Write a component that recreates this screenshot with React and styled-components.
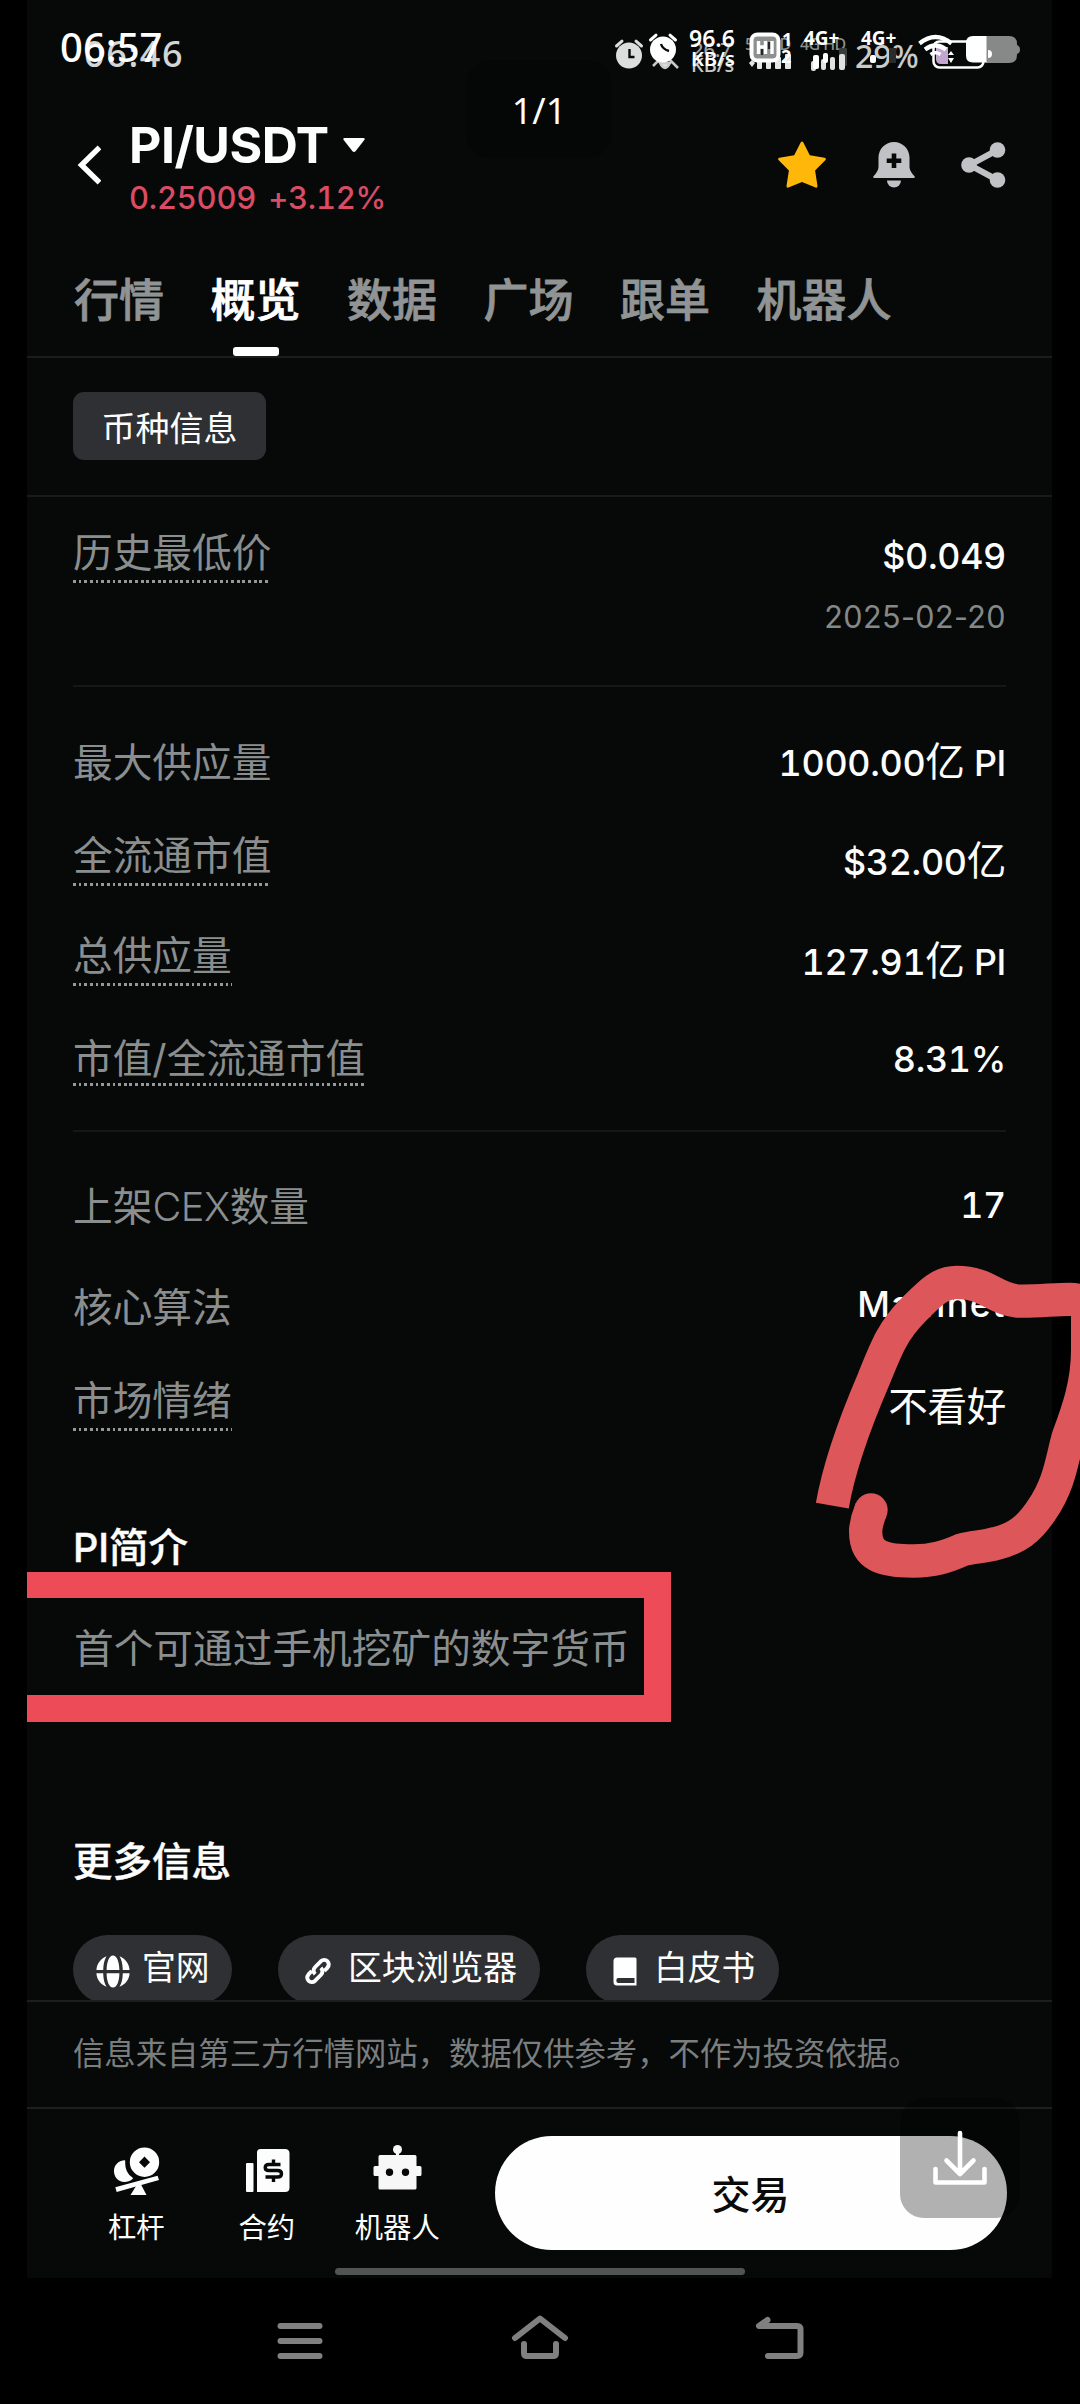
import React from "react";
import styled, { createGlobalStyle } from "styled-components";

const Global = createGlobalStyle`
  * { box-sizing: border-box; }
  body {
    margin: 0;
    background: #000;
    font-family: Inter, "Noto Sans CJK SC", sans-serif;
    color: #fdfdfd;
  }
`;

const Screen = styled.div`
  position: relative;
  width: 1080px;
  height: 2404px;
  overflow: hidden;
  background: #000;
`;

const Panel = styled.main`
  display: flex;
  flex-direction: column;
  width: 1025px;
  height: 2278px;
  margin-left: 27px;
  padding-top: 90px;
  background: #060908;
`;

/* ---------- header ---------- */
const Header = styled.header`
  display: flex;
  height: 160px;
  padding: 30px 46px 0 44px;
`;

const IconSlot = styled.div`
  display: flex;
  align-items: center;
  height: 89px;
  gap: ${(p) => p.$gap || 0}px;
`;

const TitleBlock = styled.div`
  flex: 1;
  margin-left: 28px;
`;

const Title = styled.h1`
  display: flex;
  align-items: center;
  gap: 13px;
  margin: 0;
  font-size: 50px;
  font-weight: 700;
  line-height: 50px;
  letter-spacing: -0.5px;
`;

const Price = styled.div`
  margin: 8px 0 0;
  color: #d94c64;
  font-size: 31px;
  font-weight: 500;
  line-height: 40px;
  letter-spacing: -0.25px;
  word-spacing: 4px;
  font-feature-settings: "tnum";
`;

/* ---------- tabs ---------- */
const Tabs = styled.nav`
  display: flex;
  gap: 46.5px;
  height: 108px;
  padding-left: 47px;
  border-bottom: 2px solid #1a1d1c;
`;

const Tab = styled.div`
  display: flex;
  flex-direction: column;
  align-items: center;
  justify-content: space-between;
  padding-top: 26px;
  color: ${(p) => (p.$active ? "#fff" : "#909495")};
  -webkit-text-stroke: 0.8px currentColor;
  font-size: 45px;
  font-weight: 500;
  line-height: 50px;
  &::after {
    content: "";
    width: 46px;
    height: 9px;
    border-radius: 3px;
    background: ${(p) => (p.$active ? "#fff" : "transparent")};
  }
`;

const TagBar = styled.div`
  height: 139px;
  padding: 34px 46px 0;
  border-bottom: 2px solid #181b1a;
`;

const Tag = styled.span`
  display: inline-flex;
  align-items: center;
  justify-content: center;
  width: 193px;
  height: 68px;
  padding-top: 6px;
  border-radius: 11px;
  background: #2f3033;
  font-size: 34px;
  line-height: 40px;
`;

/* ---------- details ---------- */
const Body = styled.section`
  height: 1503px;
  padding: 0 46px;
  overflow: hidden;
`;

const Group = styled.div`
  padding-top: ${(p) => p.$top}px;
  border-bottom: ${(p) => (p.$last ? "none" : "2px solid #141716")};
`;

const Row = styled.div`
  display: flex;
  justify-content: space-between;
  align-items: flex-start;
  height: ${(p) => p.$h}px;
`;

const Label = styled.span`
  margin-top: 1px;
  color: #8b8e8f;
  font-size: 39.7px;
  font-weight: 400;
  line-height: 40px;
  white-space: nowrap;
  padding-bottom: ${(p) => (p.$gap ? p.$gap - 1 : 0)}px;
  background: ${(p) =>
    p.$gap
      ? "repeating-linear-gradient(90deg, #96999a 0 2.8px, transparent 2.8px 5.65px) bottom left / 100% 3px no-repeat"
      : "none"};
`;

const Latin = styled.span`
  font-weight: 300;
  letter-spacing: -0.5px;
`;

const Value = styled.div`
  margin-top: ${(p) => p.$dy || 0}px;
  font-size: 35.8px;
  font-weight: 500;
  line-height: 40px;
  letter-spacing: ${(p) => (p.$ls === undefined ? -0.3 : p.$ls)}px;
  text-align: right;
  font-feature-settings: "tnum";
  & small {
    display: block;
    margin-top: 21px;
    color: #858889;
    font-size: 30.5px;
    font-weight: 400;
    letter-spacing: 0.4px;
    font-feature-settings: normal;
  }
`;

const Han = styled.span`
  font-size: 39.6px;
  font-weight: 400;
`;

const SectionTitle = styled.h2`
  margin: 0;
  padding-top: 1px;
  font-size: 39.5px;
  font-weight: 500;
  line-height: 39px;
  -webkit-text-stroke: 0.4px currentColor;
`;

const Highlight = styled.div`
  width: 644px;
  height: 150px;
  margin: 4px 0 120px -46px;
  padding: 31px 0 0 47px;
  border: solid #ee4b58;
  border-width: 26px 27px 27px 0;
`;

const Links = styled.div`
  display: flex;
  gap: 46px;
  margin-top: 53px;
`;

const Pill = styled.a`
  display: flex;
  align-items: center;
  flex: none;
  gap: ${(p) => p.$gap}px;
  width: ${(p) => p.$w}px;
  height: 69px;
  padding: 0 0 4px ${(p) => p.$pad}px;
  border-radius: 35px;
  background: #2f3033;
  font-size: 33.8px;
  line-height: 40px;
  white-space: nowrap;
  & svg { margin-top: 7px; }
`;

const Disclaimer = styled.p`
  height: 107px;
  margin: 0;
  padding: 30px 46px 0;
  border-top: 2px solid #1c1f1e;
  color: #7b7e7f;
  font-size: 31.35px;
  font-weight: 400;
  line-height: 40px;
  font-family: "Noto Sans CJK SC", sans-serif;
`;

/* ---------- bottom bar ---------- */
const BottomBar = styled.footer`
  display: flex;
  height: 161px;
  padding: 27px 0 0 44px;
  border-top: 2px solid #1c1f1e;
`;

const Shortcut = styled.div`
  display: flex;
  flex-direction: column;
  align-items: center;
  gap: 15px;
  width: 130.5px;
  padding-top: 8px;
  font-size: 28.3px;
  line-height: 34px;
`;

const TradeButton = styled.button`
  width: 512px;
  height: 114px;
  margin-left: 32px;
  padding: 0 0 2px;
  border: 0;
  border-radius: 57px;
  background: #fefefe;
  color: #0a0a0a;
  font: 500 39px Inter, "Noto Sans CJK SC", sans-serif;
`;

const HomeIndicator = styled.div`
  flex: none;
  width: 410px;
  height: 7px;
  margin: 0 auto;
  border-radius: 4px;
  background: #525453;
`;

const SystemNav = styled.nav`
  display: flex;
  justify-content: space-between;
  align-items: center;
  height: 126px;
  padding: 0 270px;
`;

/* ---------- floating layers ---------- */
const PageCount = styled.div`
  position: absolute;
  left: 466px;
  top: 60px;
  width: 146px;
  height: 98px;
  border-radius: 24px;
  background: rgba(0, 0, 0, 0.22);
  font: 400 36px/98px "Noto Sans", sans-serif;
  padding-top: 2px;
  text-align: center;
`;

const Download = styled.div`
  position: absolute;
  left: 900px;
  top: 2098px;
  width: 120px;
  height: 120px;
  border-radius: 24px;
  background: rgba(0, 0, 0, 0.3);
`;

const Scribble = styled.svg`
  position: absolute;
  left: 740px;
  top: 1150px;
`;

const StatusLayer = styled.div`
  position: absolute;
  inset: 0 0 auto 0;
  height: 90px;
`;

const StatusArt = styled.svg`
  position: absolute;
  left: 600px;
  top: 20px;
`;

const StatusText = styled.span`
  position: absolute;
  left: ${(p) => p.$x}px;
  top: ${(p) => p.$y}px;
  color: ${(p) => p.$c || "#fff"};
  font-family: "Noto Sans", sans-serif;
  font-size: ${(p) => p.$s}px;
  font-weight: ${(p) => p.$w || 500};
  line-height: 1;
  letter-spacing: ${(p) => p.$ls || 0}px;
  white-space: nowrap;
`;

/* ---------- drawings ---------- */
const BackIcon = () => (
  <svg width="30" height="40" viewBox="0 0 30 40" fill="none" stroke="#fff" strokeWidth="5.4">
    <path d="M28.5 2.5 10.5 20 28.5 37.5" strokeLinejoin="miter" />
  </svg>
);

const Caret = () => (
  <svg width="24" height="16" viewBox="0 0 24 16" fill="#fff">
    <path d="M2.5 1h19q2 .4.8 2L13.5 14.200q-1.500 1.500-3 0L1.700 3q-1.200-1.600.8-2z" />
  </svg>
);

const Star = () => (
  <svg width="48" height="47" viewBox="0 0 48 47" fill="#ffb70a">
    <path d="M22.800 1.200q1.200-1.600 2.400 0L31.800 14.300l14.800 2.400q2 .6.900 2.200L37.100 29.500l2.400 15.600q0 2-1.900 1.500L24 41l-13.600 5.600q-1.900.5-1.900-1.500l2.400-15.600L.5 18.900q-1.100-1.600.9-2.200l14.800-2.400z" />
  </svg>
);

const Bell = () => (
  <svg width="42" height="46" viewBox="0 0 42 46" fill="#bfc3c5">
    <path
      fillRule="evenodd"
      d="M21 0C29.500 0 36.500 7 36.500 15.500V25c0 3 2 6 5.200 9.400q.5 1.600-1 1.600H1.300q-1.500 0-1-1.600C3.500 31 5.500 28 5.500 25V15.500C5.500 7 12.500 0 21 0zM18.700 11.500v5h-5v4.600h5v5h4.600v-5h5v-4.600h-5v-5z"
    />
    <path d="M14 38.500h14a7 7 0 0 1-14 0z" />
  </svg>
);

const Share = () => (
  <svg width="45" height="46" viewBox="0 0 45 46" fill="#bfc3c5" stroke="#bfc3c5">
    <path d="M36.500 8 8.500 23l28 15" fill="none" strokeWidth="6" />
    <circle cx="8" cy="23" r="7.800" stroke="none" />
    <circle cx="36.500" cy="8" r="7.800" stroke="none" />
    <circle cx="36.500" cy="38" r="7.800" stroke="none" />
  </svg>
);

const Globe = () => (
  <svg width="34" height="33" viewBox="0 0 34 33" fill="#fff">
    <path d="M17 .5C13 .5 10.800 7 10.600 15h12.800C23.200 7 21 .5 17 .5zM17 32.500c4 0 6.200-6 6.400-14.200H10.600C10.800 26.500 13 32.500 17 32.500z" />
    <path d="M10.500 1.200C4.700 3.500.8 8.700.4 15h6.800c.1-5.800 1.200-10.600 3.300-13.800zM23.500 1.200c5.800 2.300 9.700 7.500 10.100 13.800h-6.800c-.1-5.800-1.200-10.600-3.300-13.800zM10.500 31.800C4.700 29.500.8 24.600.4 18.300h6.800c.1 5.800 1.200 10.300 3.300 13.500zM23.500 31.800c5.800-2.300 9.700-7.200 10.100-13.500h-6.800c-.1 5.800-1.200 10.300-3.300 13.500z" />
  </svg>
);

const LinkIcon = () => (
  <svg width="28" height="28" viewBox="0 0 28 28" fill="none" stroke="#fff" strokeWidth="3.900" strokeLinecap="butt">
    <path d="M11.200 17.200C8.600 14.600 9.400 12 11.200 10L16.800 4.300C21.500.2 27.400 6 23.500 10.600L20.300 14" />
    <path d="M16.800 10.800C19.400 13.400 18.600 16 16.800 18L11.200 23.700C6.500 27.800.6 22 4.500 17.400L7.700 14" />
  </svg>
);

const Book = () => (
  <svg width="24" height="29" viewBox="0 0 24 29">
    <path
      fill="#fff"
      fillRule="evenodd"
      d="M4 .5h18q1.500 0 1.500 1.500v26.500H4Q.5 28.500.5 25V4Q.5.5 4 .5zM5 21q-1.700.3-1.700 2.500T5 26h16.500v-5z"
    />
  </svg>
);

const Lever = () => (
  <svg width="52" height="52" viewBox="0 0 52 52" fill="#fdfdfd">
    <path fillRule="evenodd" d="M34.500 3.500a14.700 14.700 0 1 1 0 29.400 14.700 14.700 0 0 1 0-29.400zm0 9L29 18.200l5.500 5.500 5.500-5.500z" />
    <path d="M14 16.200q1.500-.3 1.200 1.300C15 26 18 30.500 22.500 33.500q1 1-.2 1.800C17 39.500 9 38.800 5.500 33 1.800 25.500 5 17.500 14 16.200z" />
    <path d="m5.300 43.300 42.300-11.600 1.400 4.300L6.700 47.900z" />
    <path d="M27 40.500h4L36.500 51h-16z" />
  </svg>
);

const Contract = () => (
  <svg width="52" height="52" viewBox="0 0 52 52" fill="#fdfdfd">
    <rect x="5" y="19" width="7.500" height="29" rx="1" />
    <path d="M19.500 5H44q4.500 0 4.500 4.500v34Q48.500 48 44 48H16V8.500Q16 5 19.500 5z" />
    <path
      d="M39.500 20.500H28q-3.800 0-3.800 3t3.800 3h8.500q4 0 4 3.200t-4 3.300h-12M32.500 15.500v5M32.500 33v5"
      fill="none"
      stroke="#060908"
      strokeWidth="3.400"
    />
  </svg>
);

const Robot = () => (
  <svg width="52" height="52" viewBox="0 0 52 52" fill="#f7f7f7">
    <circle cx="26.500" cy="5.500" r="4.500" />
    <path d="M25 8h3v5h-3z" />
    <path
      fillRule="evenodd"
      d="M9 11h35q1.500 0 1.500 1.500V22H49q1.500 0 1.500 1.500v7Q50.500 32 49 32h-3.500v12q0 1.500-1.500 1.500H9q-1.500 0-1.500-1.500V32H4q-1.500 0-1.500-1.500v-7Q2.500 22 4 22h3.500v-9.500Q7.500 11 9 11zm9.500 13.500a3.700 3.700 0 1 0 0 7.400 3.700 3.700 0 0 0 0-7.400zm16 0a3.700 3.700 0 1 0 0 7.400 3.700 3.700 0 0 0 0-7.400z"
    />
  </svg>
);

const NavIcon = ({ d }) => (
  <svg width="60" height="60" viewBox="0 0 60 60" fill="none" stroke="#808080" strokeWidth="6" strokeLinecap="round" strokeLinejoin="round">
    <path d={d} />
  </svg>
);

const AlarmClock = ({ x, y, c, hands }) => (
  <g transform={`translate(${x} ${y})`}>
    <circle cx="14" cy="15.500" r="13" fill={c} />
    <path d="M1.500 6 7 1.200M26.500 6 21 1.200" stroke={c} strokeWidth="3" fill="none" strokeLinecap="round" />
    <path d={hands} stroke="#060908" strokeWidth="2.400" fill="none" />
  </g>
);

const StatusDrawings = () => (
  <StatusArt width="430" height="56" viewBox="600 20 430 56">
    <AlarmClock x={615} y={40} c="#dcdedd" hands="M14.500 9v8h5" />
    <path d="m653 66 6-6M678 68l-8-8M660 63q5 10 10 0z" stroke="#c8caca" strokeWidth="2.500" fill="#dcdedd" />
    <AlarmClock x={649} y={34} c="#fff" hands="M12 10q1.500 5 8 7" />
    <g fill="#e4e5e5">
      <rect x="757" y="61" width="5" height="8" rx="1" />
      <rect x="766" y="60" width="5" height="9" rx="1" />
      <rect x="775" y="57" width="6" height="12" rx="1" />
      <rect x="785" y="54" width="6" height="15" rx="1" />
      <path d="m749 63 3-3 3 3-3 4z" />
    </g>
    <rect x="751.500" y="34.500" width="27" height="26" rx="6" fill="#8e908f" stroke="#fff" strokeWidth="4" />
    <path d="M758.500 41v13M765.500 41v13M758.500 47h7M772 41v13" stroke="#fff" strokeWidth="3.400" fill="none" />
    <path d="M762 49v6M769 42v7" stroke="#222524" strokeWidth="2.200" fill="none" />
    <rect x="839" y="48" width="8" height="18" rx="1" fill="#3b3d3c" />
    <g fill="#e0e1e1">
      <rect x="811" y="61" width="5" height="10" rx="2" />
      <rect x="821" y="59" width="5" height="11" rx="2" />
      <rect x="830" y="57" width="5" height="13" rx="2" />
      <rect x="839" y="54" width="6" height="16" rx="2" />
      <rect x="813" y="55" width="6" height="14" rx="2" fill="#fff" />
      <rect x="823" y="53" width="5" height="10" rx="2" fill="#fff" />
    </g>
    <rect x="889" y="48" width="7" height="15" fill="#2a2c2b" />
    <rect x="870" y="55" width="6" height="8" rx="2" fill="#fff" />
    <rect x="933.500" y="41.500" width="50" height="26" rx="6" fill="none" stroke="#fff" strokeWidth="2.500" />
    <path d="M936 47h12v17h-7q-5 0-5-5z" fill="#c3a6cf" />
    <g fill="none" stroke="#fff" strokeWidth="4.200">
      <path d="M919.500 43.500q16-13 32 0" />
      <path d="M925 49.500q10.500-8 21 0" />
      <path d="M930.500 54.500q5-3.500 10 0" strokeWidth="3.500" />
    </g>
    <path d="m948 55 3-4 3 4zM948 58l3 5 3-5z" fill="#fff" />
    <path d="M986 36h23q8 0 8 8v1q3 1 3 4.500t-3 4.500v1q0 8-8 8h-23z" fill="#878888" />
    <path d="M973 36h13.500v26.500H973q-7 0-7-7V43q0-7 7-7z" fill="#fff" />
    <path d="M988 50q4 0 4 4t-4 4z" fill="#fff" />
  </StatusArt>
);

const supply = [
  { label: "最大供应量", num: "1000.00", unit: "亿", tail: "PI", h: 93, dy: 0 },
  { label: "全流通市值", num: "$32.00", unit: "亿", h: 100, dy: 6, gap: 11 },
  { label: "总供应量", num: "127.91", unit: "亿", tail: "PI", h: 103, dy: 6, gap: 11 },
  { label: "市值/全流通市值", num: "8.31%", h: 92, dy: 1, gap: 8 },
];

const backTexts = [
  { t: "06:46", x: 84, y: 36, s: 36, c: "#d4d6d5", ls: 1.6 },
  { t: "06:57", x: 60, y: 27, s: 40 },
  { t: "26.7", x: 692, y: 40, s: 20, c: "#a0a2a1" },
  { t: "KB/s", x: 691, y: 55, s: 20, c: "#c9cbca" },
  { t: "5G HD", x: 745, y: 36, s: 16, c: "#8d8f8e", ls: -0.6 },
  { t: "4G HD", x: 800, y: 36, s: 16, c: "#8d8f8e", ls: -0.6 },
  { t: "29%", x: 855, y: 40, s: 32, c: "#c9cbca" },
];

const frontTexts = [
  { t: "96.6", x: 689, y: 27, s: 23, w: 600 },
  { t: "KB/s", x: 691, y: 49, s: 20, w: 600 },
  { t: "1", x: 782, y: 30, s: 18, w: 700 },
  { t: "2", x: 781, y: 47, s: 18, w: 700 },
  { t: "4G+", x: 804, y: 29, s: 19, w: 700 },
  { t: "4G+", x: 861, y: 29, s: 19, w: 700 },
];

const renderTexts = (list) =>
  list.map((s) => (
    <StatusText key={s.t + s.x + s.y} $x={s.x} $y={s.y} $s={s.s} $c={s.c} $w={s.w} $ls={s.ls}>
      {s.t}
    </StatusText>
  ));

export default function App() {
  return (
    <Screen>
      <Global />
      <Panel>
        <Header>
          <IconSlot><BackIcon /></IconSlot>
          <TitleBlock>
            <Title>PI/USDT<Caret /></Title>
            <Price>0.25009 +3.12%</Price>
          </TitleBlock>
          <IconSlot $gap={46.5}><Star /><Bell /><Share /></IconSlot>
        </Header>
        <Tabs>
          {["行情", "概览", "数据", "广场", "跟单", "机器人"].map((t) => (
            <Tab key={t} $active={t === "概览"}>{t}</Tab>
          ))}
        </Tabs>
        <TagBar><Tag>币种信息</Tag></TagBar>
        <Body>
          <Group $top={35}>
            <Row $h={153}>
              <Label $gap={11}>历史最低价</Label>
              <Value $dy={4}>$0.049<small>2025-02-20</small></Value>
            </Row>
          </Group>
          <Group $top={55}>
            {supply.map((r) => (
              <Row key={r.label} $h={r.h}>
                <Label $gap={r.gap}>{r.label}</Label>
                <Value $dy={r.dy}>
                  {r.num}
                  {r.unit && <Han>{r.unit}</Han>}
                  {r.tail && " " + r.tail}
                </Value>
              </Row>
            ))}
          </Group>
          <Group $top={54} $last>
            <Row $h={101}><Label>上架<Latin>CEX</Latin>数量</Label><Value $dy={-1}>17</Value></Row>
            <Row $h={93}><Label>核心算法</Label><Value $dy={-3} $ls={1.5}>Mainnet</Value></Row>
            <Row $h={148}><Label $gap={11}>市场情绪</Label><Value $dy={7}><Han>不看好</Han></Value></Row>
          </Group>
          <SectionTitle>PI简介</SectionTitle>
          <Highlight><Label>首个可通过手机挖矿的数字货币</Label></Highlight>
          <SectionTitle>更多信息</SectionTitle>
          <Links>
            <Pill $w={159} $pad={23} $gap={12}><Globe />官网</Pill>
            <Pill $w={262} $pad={26} $gap={16}><LinkIcon />区块浏览器</Pill>
            <Pill $w={193} $pad={27} $gap={17}><Book />白皮书</Pill>
          </Links>
        </Body>
        <Disclaimer>信息来自第三方行情网站，数据仅供参考，不作为投资依据。</Disclaimer>
        <BottomBar>
          <Shortcut><Lever />杠杆</Shortcut>
          <Shortcut><Contract />合约</Shortcut>
          <Shortcut><Robot />机器人</Shortcut>
          <TradeButton>交易</TradeButton>
        </BottomBar>
        <HomeIndicator />
      </Panel>
      <SystemNav>
        <NavIcon d="M10.500 15h39M10.500 30h39M10.500 45h39" />
        <NavIcon d="M5 27 30 7.500 55 27M14 33v9q0 3 3 3h26q3 0 3-3v-9" />
        <NavIcon d="M17.500 9 9 15h38q3.500 0 3.500 3.500v23q0 3.500-3.500 3.500H18" />
      </SystemNav>

      <Scribble width="340" height="450" viewBox="0 0 1020 1350" fill="none" stroke="#dc565a" strokeWidth="100">
        <path
          strokeLinejoin="round"
          d="M277 1067C297 950 340 830 400 690C440 590 460 540 520 480C570 430 600 397 650 397C740 397 760 445 830 453C890 455 940 448 990 448Q1043 448 1043 500V600C1043 700 1015 780 985 860C965 930 960 1000 905 1080C865 1140 830 1165 770 1180C730 1192 700 1190 665 1200C620 1220 580 1233 520 1233C430 1233 375 1220 377 1140Q380 1110 393 1080"
        />
        <circle cx="393" cy="1080" r="50" fill="#dc565a" stroke="none" />
      </Scribble>

      <PageCount>1/1</PageCount>
      <Download>
        <svg width="120" height="120" viewBox="0 0 120 120" fill="none" stroke="#fff" strokeWidth="4.600" strokeLinecap="round" strokeLinejoin="round">
          <path d="M60 35v38M46.500 62.500 60 76l13.500-13.500M35.500 71v13.500h49V71" />
        </svg>
      </Download>
      <StatusLayer>
        {renderTexts(backTexts)}
        <StatusDrawings />
        {renderTexts(frontTexts)}
      </StatusLayer>
    </Screen>
  );
}
